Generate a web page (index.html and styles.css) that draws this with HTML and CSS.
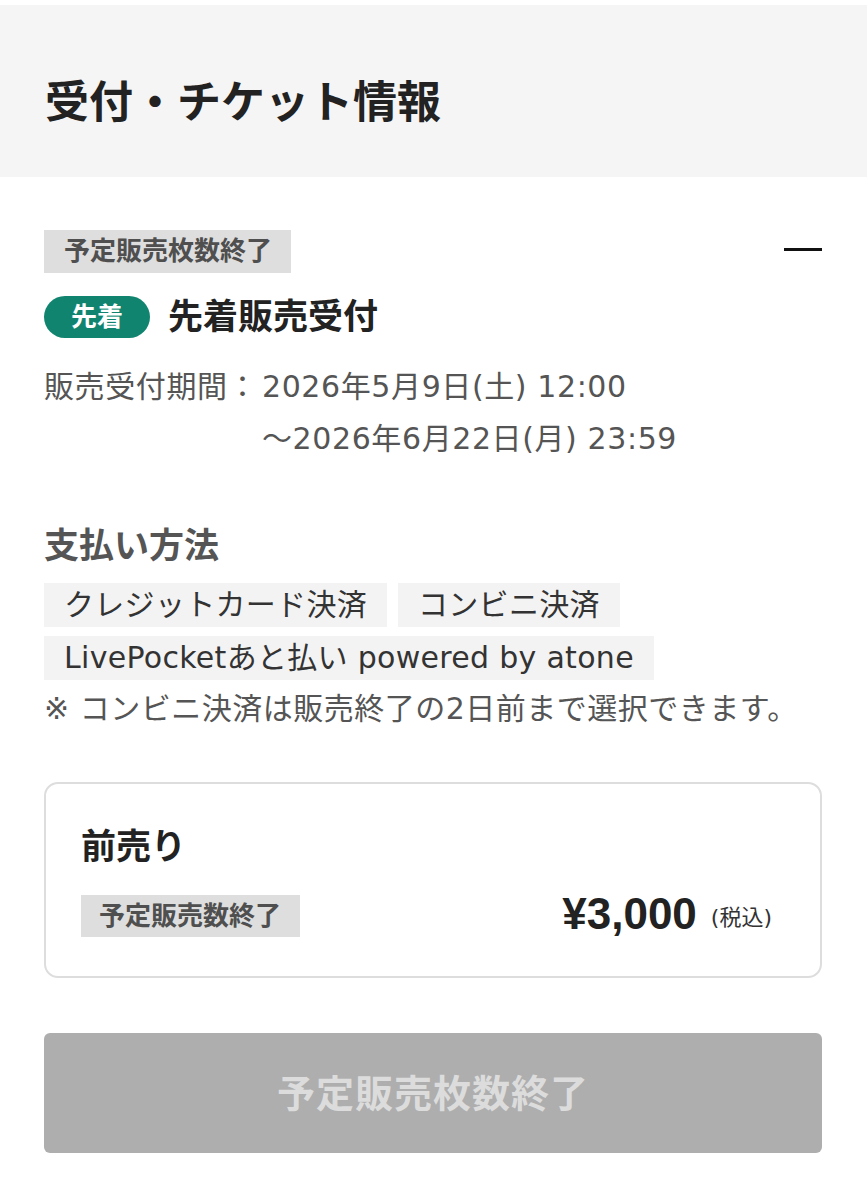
FILE: index.html
```html
<!DOCTYPE html>
<html lang="ja">
<head>
  <meta charset="UTF-8" />
  <meta name="viewport" content="width=device-width, initial-scale=1" />
  <title>受付・チケット情報</title>
  <link rel="stylesheet" href="styles.css">
</head>
<body>

<header class="page-head">
  <h1>受付・チケット情報</h1>
</header>

<section class="sale">
  <div class="sale-top">
    <span class="status">予定販売枚数終了</span>
    <span class="toggle" aria-label="閉じる"></span>
  </div>

  <div class="sale-title">
    <span class="pill">先着</span>
    <h2>先着販売受付</h2>
  </div>

  <div class="period">
    <span class="period-label">販売受付期間：</span>
    <span>2026年5月9日(土) 12:00</span>
    <span></span>
    <span>～2026年6月22日(月) 23:59</span>
  </div>

  <h3 class="pay-head">支払い方法</h3>
  <ul class="pay-list">
    <li>クレジットカード決済</li>
    <li>コンビニ決済</li>
    <li>LivePocketあと払い powered by atone</li>
  </ul>
  <p class="note">※ コンビニ決済は販売終了の2日前まで選択できます。</p>

  <div class="ticket">
    <h4>前売り</h4>
    <div class="ticket-row">
      <span class="status small">予定販売数終了</span>
      <span class="price">¥3,000<small>(税込)</small></span>
    </div>
  </div>

  <button class="buy" disabled>予定販売枚数終了</button>
</section>

</body>
</html>
```

FILE: styles.css
```css
body {
  margin: 0;
  font-family: "DejaVu Sans", "Noto Sans CJK JP", sans-serif;
  color: #222;
  background: #fff;
}
h1, h2, h3, h4, p, ul {
  margin: 0;
  padding: 0;
}
.page-head {
  margin-top: 5px;
  height: 172px;
  box-sizing: border-box;
  padding: 24px 45px 0;
  background: #f5f5f5;
  display: flex;
  align-items: center;
}
.page-head h1 {
  font-size: 44px;
  line-height: 50px;
  font-weight: 700;
}
.sale {
  padding: 53px 45px 46px 44px;
}
.sale-top {
  display: flex;
  justify-content: space-between;
  align-items: center;
}
.status {
  display: inline-block;
  background: #dedede;
  color: #4f4f4f;
  font-size: 26px;
  font-weight: 700;
  line-height: 43px;
  padding: 0 19px 0 20px;
}
.toggle {
  width: 38px;
  height: 3px;
  background: #111;
  margin-top: -4px;
}
.sale-title {
  display: flex;
  align-items: center;
  gap: 18px;
  margin-top: 23px;
}
.pill {
  background: #11846f;
  color: #fff;
  font-size: 26px;
  font-weight: 700;
  line-height: 42px;
  padding: 0 27px;
  border-radius: 21px;
}
.sale-title h2 {
  font-size: 35px;
  line-height: 42px;
  font-weight: 700;
}
.period {
  display: grid;
  grid-template-columns: 218px 1fr;
  margin-top: 23px;
  font-size: 30px;
  line-height: 52px;
  letter-spacing: 0.6px;
  color: #555;
}
.pay-head {
  margin-top: 61px;
  font-size: 35px;
  line-height: 40px;
  font-weight: 700;
  color: #555;
}
.pay-list {
  list-style: none;
  display: flex;
  flex-wrap: wrap;
  gap: 9px 11px;
  margin-top: 17px;
}
.pay-list li {
  background: #f3f3f3;
  color: #333;
  font-size: 30px;
  line-height: 44px;
  letter-spacing: 0.3px;
  padding: 0 20px;
}
.note {
  margin-top: 3px;
  font-size: 30px;
  line-height: 52px;
  letter-spacing: 0.5px;
  color: #555;
}
.ticket {
  margin-top: 47px;
  border: 2px solid #ddd;
  border-radius: 14px;
  padding: 43px 48px 39px 35px;
}
.ticket h4 {
  font-size: 35px;
  line-height: 40px;
  font-weight: 700;
}
.ticket-row {
  display: flex;
  justify-content: space-between;
  align-items: center;
  height: 42px;
  margin-top: 28px;
}
.status.small {
  line-height: 42px;
  padding: 0 19px 0 18px;
}
.price {
  font-family: "Liberation Sans", "Noto Sans CJK JP", sans-serif;
  font-size: 44px;
  font-weight: 700;
  line-height: 42px;
  white-space: nowrap;
}
.price small {
  font-family: "DejaVu Sans", "Noto Sans CJK JP", sans-serif;
  font-size: 22px;
  font-weight: 400;
  color: #333;
  margin-left: 14px;
  vertical-align: 4px;
}
.buy {
  display: block;
  width: 100%;
  margin-top: 55px;
  height: 120px;
  padding-bottom: 6px;
  border: none;
  border-radius: 6px;
  background: #aeaeae;
  color: #dcdcdc;
  font-family: inherit;
  font-size: 38px;
  font-weight: 700;
  letter-spacing: 1px;
}
```
